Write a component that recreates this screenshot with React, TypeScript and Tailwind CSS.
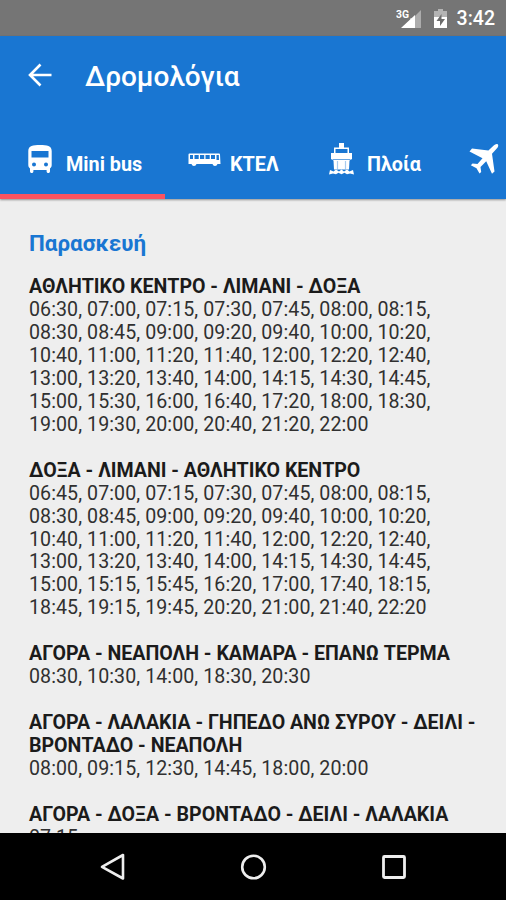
import type { ReactNode } from 'react';
import { clsx } from 'clsx';

interface Route {
  name: string[];
  times: string[];
}

const routes: Route[] = [
  {
    name: ['ΑΘΛΗΤΙΚΟ ΚΕΝΤΡΟ - ΛΙΜΑΝΙ - ΔΟΞΑ'],
    times: [
      '06:30, 07:00, 07:15, 07:30, 07:45, 08:00, 08:15,',
      '08:30, 08:45, 09:00, 09:20, 09:40, 10:00, 10:20,',
      '10:40, 11:00, 11:20, 11:40, 12:00, 12:20, 12:40,',
      '13:00, 13:20, 13:40, 14:00, 14:15, 14:30, 14:45,',
      '15:00, 15:30, 16:00, 16:40, 17:20, 18:00, 18:30,',
      '19:00, 19:30, 20:00, 20:40, 21:20, 22:00',
    ],
  },
  {
    name: ['ΔΟΞΑ - ΛΙΜΑΝΙ - ΑΘΛΗΤΙΚΟ ΚΕΝΤΡΟ'],
    times: [
      '06:45, 07:00, 07:15, 07:30, 07:45, 08:00, 08:15,',
      '08:30, 08:45, 09:00, 09:20, 09:40, 10:00, 10:20,',
      '10:40, 11:00, 11:20, 11:40, 12:00, 12:20, 12:40,',
      '13:00, 13:20, 13:40, 14:00, 14:15, 14:30, 14:45,',
      '15:00, 15:15, 15:45, 16:20, 17:00, 17:40, 18:15,',
      '18:45, 19:15, 19:45, 20:20, 21:00, 21:40, 22:20',
    ],
  },
  {
    name: ['ΑΓΟΡΑ - ΝΕΑΠΟΛΗ - ΚΑΜΑΡΑ - ΕΠΑΝΩ ΤΕΡΜΑ'],
    times: ['08:30, 10:30, 14:00, 18:30, 20:30'],
  },
  {
    name: ['ΑΓΟΡΑ - ΛΑΛΑΚΙΑ - ΓΗΠΕΔΟ ΑΝΩ ΣΥΡΟΥ - ΔΕΙΛΙ -', 'ΒΡΟΝΤΑΔΟ - ΝΕΑΠΟΛΗ'],
    times: ['08:00, 09:15, 12:30, 14:45, 18:00, 20:00'],
  },
  {
    name: ['ΑΓΟΡΑ - ΔΟΞΑ - ΒΡΟΝΤΑΔΟ - ΔΕΙΛΙ - ΛΑΛΑΚΙΑ'],
    times: ['07:15'],
  },
];

function StatusBar() {
  return (
    <div className="flex h-9 shrink-0 items-center justify-end bg-[#757575] pr-[11px] pt-[2px] text-white">
      <svg width="26" height="21" viewBox="0 0 26 21" className="mr-[11px]">
        <text x="0" y="9" fontSize="11" fontWeight="700" fill="#fff" textLength="13" lengthAdjust="spacingAndGlyphs">3G</text>
        <path d="M25 1v18H6l8-8V9h3z" fill="#fff" fillOpacity=".4" />
        <path d="M19 6v13H5z" fill="#fff" />
      </svg>
      <svg width="15" height="21" viewBox="0 0 15 21" className="mr-[9px]">
        <path d="M5 0h5v2h4v6H1V2h4z" fill="#b4b4b4" />
        <path d="M1 8h13v11H1z" fill="#fff" />
        <path d="M8.5 5 3.5 12h3.5v5l5-7H8.5z" fill="#6b6b6b" />
      </svg>
      <span className="text-[19.5px] font-medium leading-none">3:42</span>
    </div>
  );
}

function BusIcon() {
  return (
    <svg width="24" height="29" viewBox="0 0 24 29" fill="#fff">
      <path
        fillRule="evenodd"
        d="M12 0C5 0 .3.8.3 6v14c0 1.700.7 2.700 1.700 3.500v2.700c0 1 .7 1.800 1.700 1.800s1.700-.8 1.700-1.800V25h13.200v1.200c0 1 .7 1.800 1.700 1.800s1.700-.8 1.700-1.800v-2.700c1-.8 1.700-1.800 1.700-3.500V6C23.700.8 19 0 12 0zM3.500 6h17v6.500h-17zM6 17.500a2 2 0 1 1 0 4 2 2 0 0 1 0-4zm12 0a2 2 0 1 1 0 4 2 2 0 0 1 0-4z"
      />
    </svg>
  );
}

function CoachIcon() {
  return (
    <svg width="33" height="14" viewBox="0 0 33 14" fill="#fff">
      <path
        fillRule="evenodd"
        d="M1.500.5h29.500q1 0 1 1l.500 9.500h-3a2.600 2.600 0 0 1-5 0H8.500a2.600 2.600 0 0 1-5 0H.5v-9.500q0-1 1-1zM2 2v4h3V2zm4.500 0v4h4.200V2zm5.500 0v4h4.200V2zm5.500 0v4h4.200V2zm5.500 0v4h4V2zm5.500 0v5h2.500L30.800 2z"
      />
    </svg>
  );
}

function ShipIcon() {
  return (
    <svg width="25" height="32" viewBox="0 0 25 32" fill="#fff">
      <path d="M10 0h5v5h-5z" />
      <path fillRule="evenodd" d="M5 4.500h15v6H5zm1.500 1.500v4h12V6z" />
      <path d="M2 10h21v6l-2.500 1.500-.5 9H5l-.500-9L2 16z" />
      <path d="M3.500 16.500h18" stroke="#69a6e2" strokeWidth="1" />
      <path d="M8.500 18v8M16.500 18v8" stroke="#a9ccef" strokeWidth="1.200" />
      <path d="m0 31.500 1-4.500 3.500 1.500L7 26.500l3 2 2.500-2 2.500 2 3-2 2.500 2 3.500-1.500 1 4.500-4-1-3 .8-2.500-1.500-3 1.500-3-1.500-2.500 1.500-3-.8z" />
    </svg>
  );
}

function PlaneIcon() {
  return (
    <svg width="30" height="32" viewBox="0 0 30 32" fill="#fff">
      <path d="M28.700 1.300c1 1 .6 2.600-.7 4l-5 5.400 2.500 17.800-2.500 2.200-5.800-12.400-5.700 5.700.7 5-1.700 1.500-3-5.300-5.700-2.900 1.700-1.800 5 .5 5-5.700L.5 8.500 3 5.600l16.400 2 5.300-5c1.300-1.300 3-2.200 4-1.300z" />
    </svg>
  );
}

interface TabProps {
  icon: ReactNode;
  label?: string;
  className: string;
  labelClass?: string;
}

function Tab({ icon, label, className, labelClass }: TabProps) {
  return (
    <button className={clsx('flex h-full shrink-0 items-start', className)}>
      {icon}
      {label && (
        <span className={clsx('whitespace-nowrap text-[19.8px] font-bold leading-[23px]', labelClass)}>{label}</span>
      )}
    </button>
  );
}

function Header() {
  return (
    <header className="h-[163px] shrink-0 bg-[#1976d2] text-white shadow-[0_1px_2px_rgba(0,0,0,0.4)]">
      <div className="flex h-[79px] items-center pl-7">
        <svg width="24" height="24" viewBox="0 0 24 24" fill="none" stroke="#fff" strokeWidth="2.600" className="-mt-px">
          <path d="M23.500 12H2.500M12.500 1.500 2 12l10.500 10.500" />
        </svg>
        <h1 className="ml-[33px] mt-[2px] text-[28px] font-medium leading-8">Δρομολόγια</h1>
      </div>
      <nav className="flex h-[84px] overflow-hidden">
        <Tab
          className="w-[165px] border-b-[5px] border-[#fb5360] pl-7 pt-[30px]"
          labelClass="ml-[14px] mt-2"
          icon={<BusIcon />}
          label="Mini bus"
        />
        <Tab className="w-[136px] pl-[23px] pt-[38px]" labelClass="ml-[9px]" icon={<CoachIcon />} label="ΚΤΕΛ" />
        <Tab className="w-[150px] pl-7 pt-7" labelClass="ml-[13px] mt-[10px]" icon={<ShipIcon />} label="Πλοία" />
        <Tab className="w-[160px] pl-[18px] pt-7" icon={<PlaneIcon />} />
      </nav>
    </header>
  );
}

function RouteBlock({ name, times }: Route) {
  return (
    <section className="mb-[23px] whitespace-nowrap">
      <h3 className="font-bold tracking-[-0.02px]">
        {name.map((line) => (
          <div key={line}>{line}</div>
        ))}
      </h3>
      {times.map((line) => (
        <p key={line} className="tracking-[0.08px] text-[#303030]">
          {line}
        </p>
      ))}
    </section>
  );
}

export default function App() {
  return (
    <div className="flex h-[900px] w-[506px] flex-col overflow-hidden bg-[#eeeeee] font-['Roboto',sans-serif]">
      <StatusBar />
      <Header />
      <main className="min-h-0 flex-1 overflow-hidden pl-[29px] pt-[31px] text-[19.6px] leading-[22.96px] text-[#1b1b1b]">
        <h2 className="mb-[19px] text-[22.4px] font-bold leading-[27px] text-[#1976d2]">Παρασκευή</h2>
        {routes.map((route) => (
          <RouteBlock key={route.name[0]} {...route} />
        ))}
      </main>
      {/* Android navigation bar */}
      <footer className="flex h-[67px] shrink-0 items-center justify-center gap-[113px] bg-black">
        <svg width="28" height="30" viewBox="0 0 28 30" fill="none" stroke="#eee" strokeWidth="2.600" strokeLinejoin="round">
          <path d="M25 3v23.500L4 14.800z" />
        </svg>
        <svg width="28" height="28" viewBox="0 0 28 28" fill="none" stroke="#eee" strokeWidth="2.600">
          <circle cx="14.500" cy="14" r="11.300" />
        </svg>
        <svg width="28" height="28" viewBox="0 0 28 28" fill="none" stroke="#eee" strokeWidth="2.800">
          <rect x="3.500" y="3.500" width="21" height="21" rx="1" />
        </svg>
      </footer>
    </div>
  );
}
